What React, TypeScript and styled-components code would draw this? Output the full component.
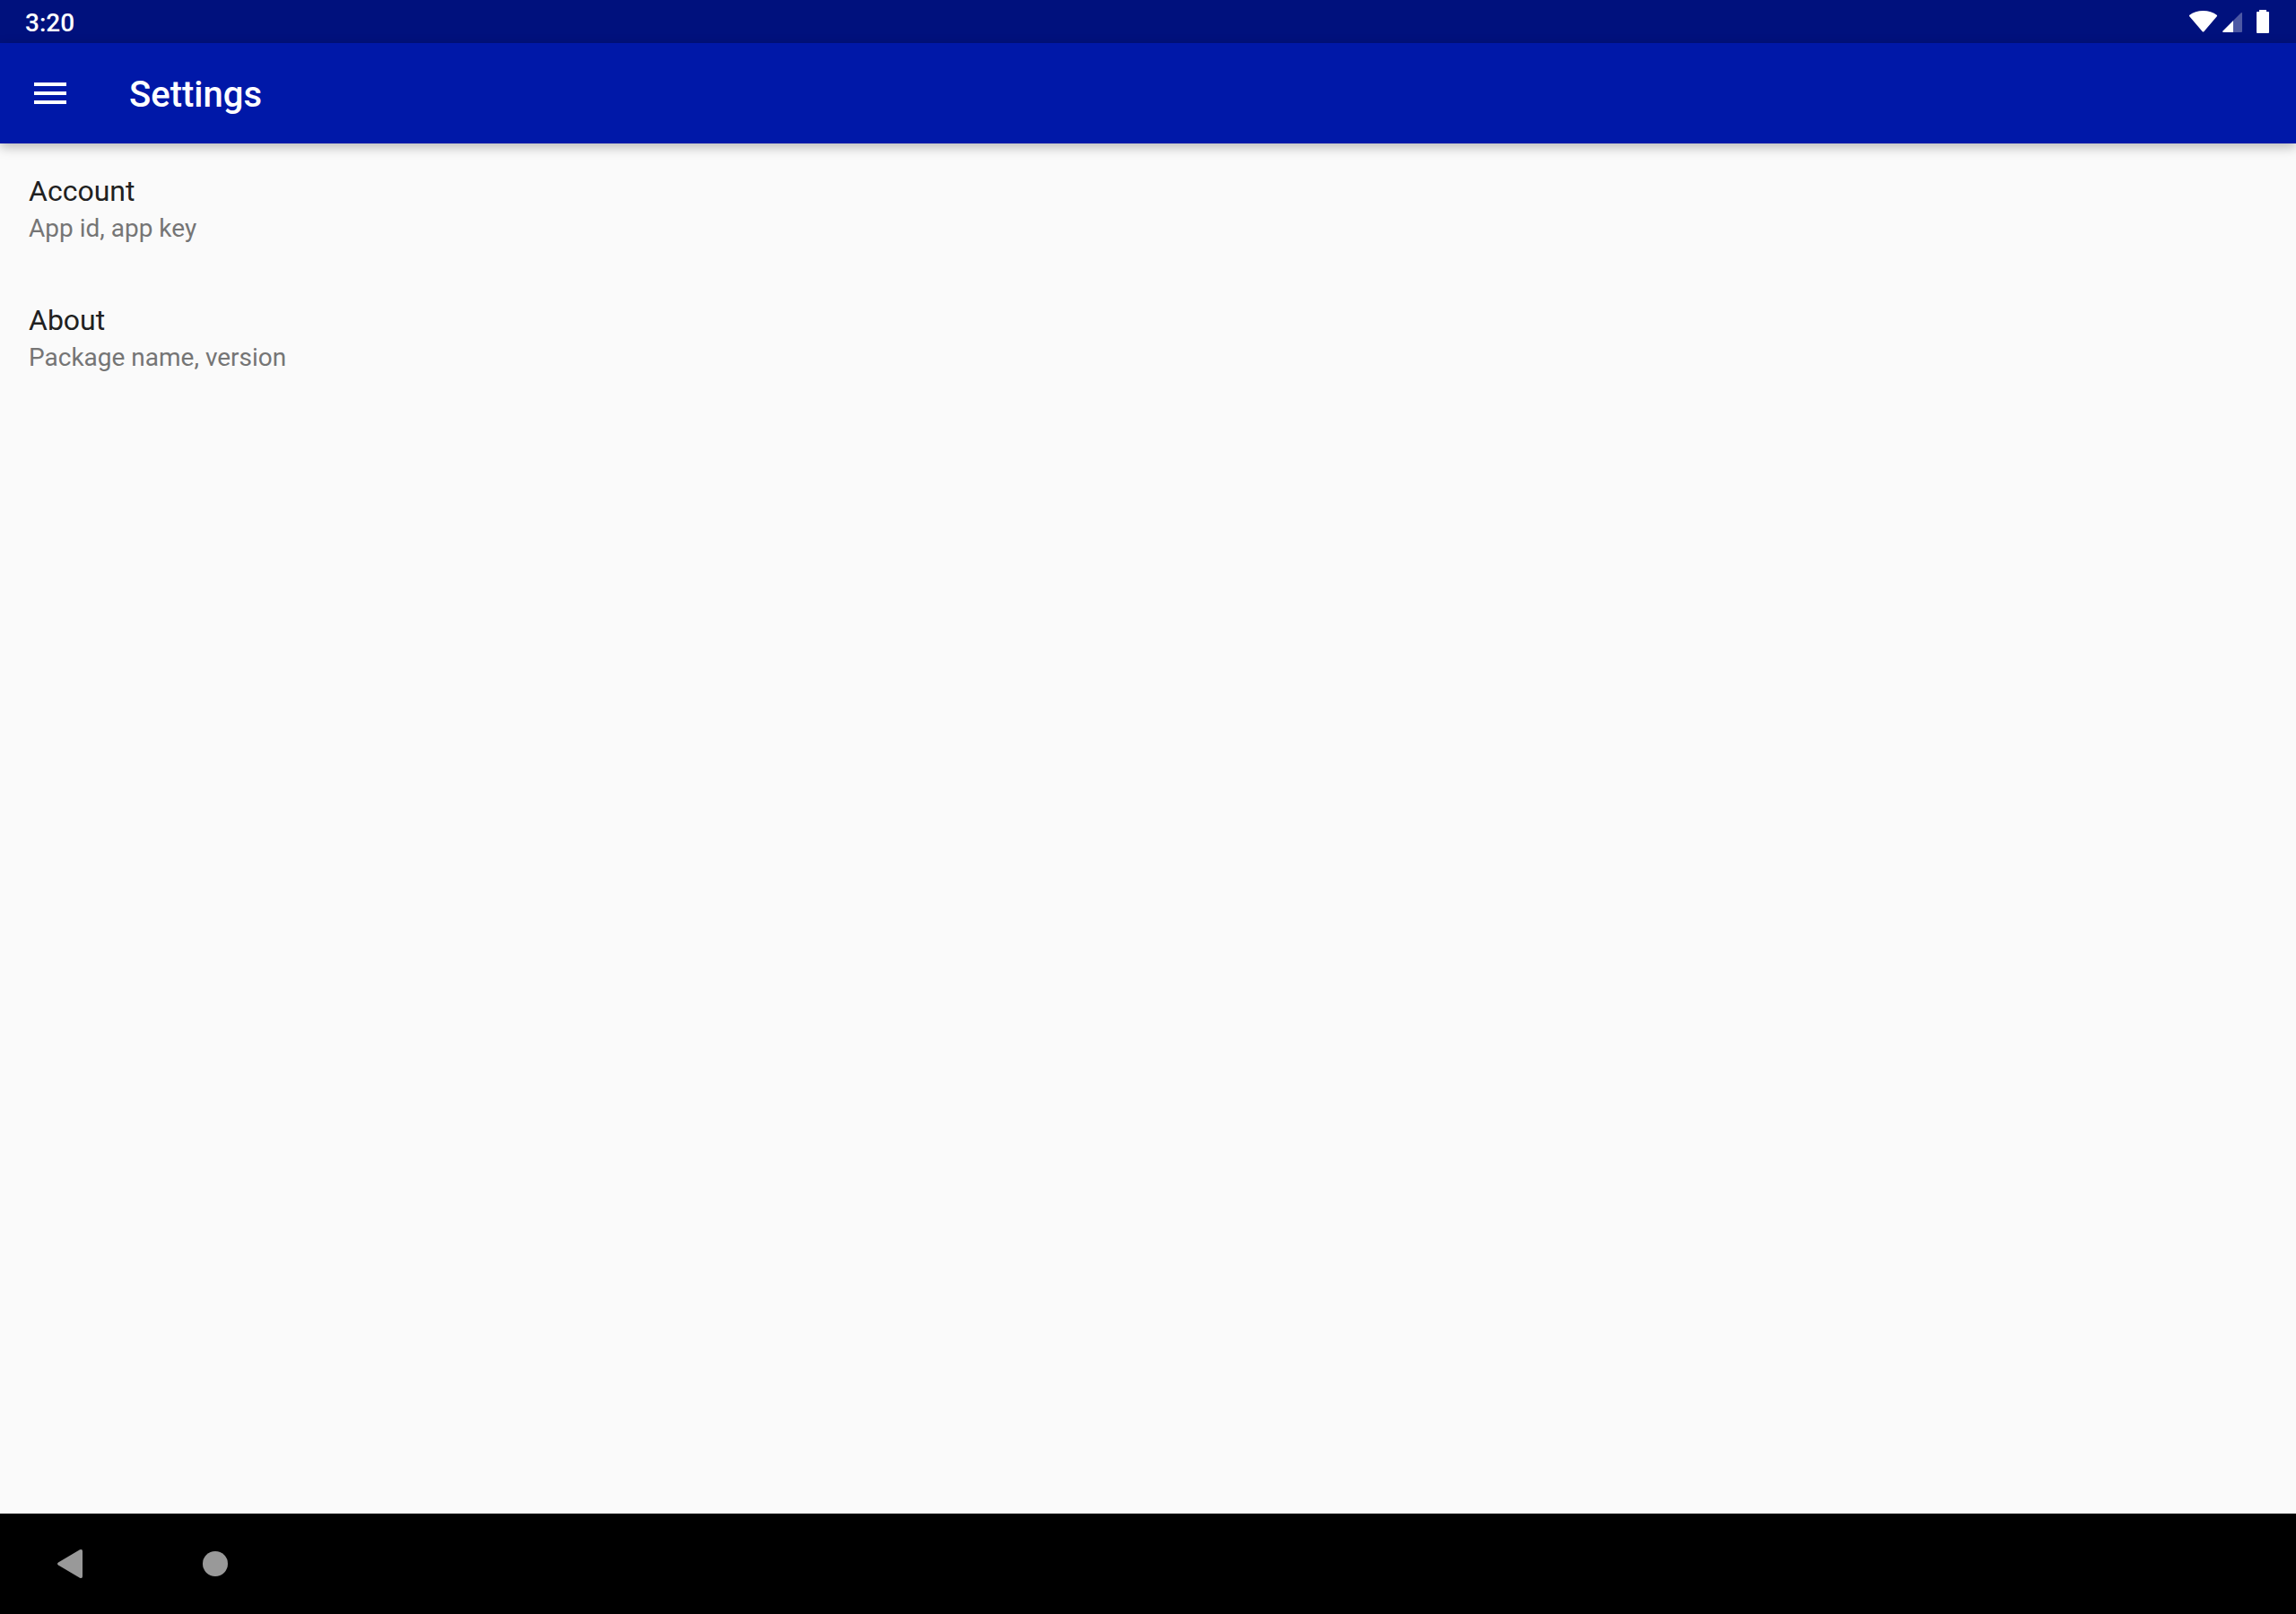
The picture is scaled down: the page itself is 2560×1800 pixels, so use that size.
import React from "react";
import styled, { createGlobalStyle } from "styled-components";

const GlobalStyle = createGlobalStyle`
  *, *::before, *::after { box-sizing: border-box; }
  body { margin: 0; background: #fafafa; font-family: Roboto, "Noto Sans", sans-serif; }
`;

const Screen = styled.div`
  display: flex;
  flex-direction: column;
  min-height: 100vh;
`;

const StatusBar = styled.div`
  display: flex;
  align-items: center;
  justify-content: space-between;
  height: 48px;
  padding: 0 28px;
  background: #00117d;
  color: #ffffff;
`;

const Clock = styled.time`
  padding-top: 4px;
  font-size: 28px;
  font-weight: 500;
  line-height: 36px;
`;

const StatusIcons = styled.svg`
  display: block;
  width: 92px;
  height: 48px;
  fill: currentColor;
`;

const AppBar = styled.header`
  display: flex;
  align-items: center;
  gap: 32px;
  height: 112px;
  background: #0018a8;
  color: #ffffff;
  box-shadow: 0 4px 12px rgba(0, 0, 0, 0.27);
`;

const IconButton = styled.button<{ $color?: string }>`
  display: flex;
  align-items: center;
  justify-content: center;
  width: 112px;
  height: 112px;
  padding: 0;
  border: 0;
  background: transparent;
  color: ${({ $color }) => $color ?? "inherit"};
  cursor: pointer;
`;

const NavButton = styled(IconButton)`
  width: 160px;
`;

const Glyph = styled.svg`
  display: block;
  width: 48px;
  height: 48px;
  fill: currentColor;
`;

const PageTitle = styled.h1`
  margin: 0;
  padding-top: 4px;
  font-size: 40px;
  font-weight: 500;
  line-height: 48px;
`;

const Preferences = styled.main`
  flex: 1;
`;

const Preference = styled.button`
  display: flex;
  flex-direction: column;
  gap: 4px;
  width: 100%;
  padding: 33px 32px 31px;
  border: 0;
  background: transparent;
  font-family: inherit;
  text-align: left;
  cursor: pointer;
`;

const PreferenceTitle = styled.span`
  color: #212121;
  font-size: 32px;
  line-height: 40px;
`;

const PreferenceSummary = styled.span`
  color: #757575;
  font-size: 28px;
  line-height: 36px;
`;

const NavigationBar = styled.nav`
  display: flex;
  height: 112px;
  background: #000000;
`;

const preferences = [
  { title: "Account", summary: "App id, app key" },
  { title: "About", summary: "Package name, version" },
];

export default function App() {
  return (
    <Screen>
      <GlobalStyle />
      <StatusBar>
        <Clock>3:20</Clock>
        <StatusIcons viewBox="0 0 92 48" role="img" aria-label="Wi-Fi, mobile signal, battery">
          <path d="M1 17Q7.500 12 16.500 12Q25.500 12 32 17L32 18L17.500 35Q16.500 36.200 15.500 35L1 18Z" />
          <path d="M59.500 14Q60 14 60 15V35Q60 36 59 36H50V23L58.500 14.500Z" opacity="0.3" />
          <path d="M50 23V36H39Q37.500 36 38.500 34.500Z" />
          <path d="M79 11H87V13H89Q90 13 90 14V36Q90 37 89 37H77Q76 37 76 36V14Q76 13 77 13H79Z" />
        </StatusIcons>
      </StatusBar>
      <AppBar>
        <IconButton aria-label="Open navigation menu">
          <Glyph viewBox="0 0 24 24" aria-hidden="true">
            <path d="M3 18h18v-2H3v2zm0-5h18v-2H3v2zm0-7v2h18V6H3z" />
          </Glyph>
        </IconButton>
        <PageTitle>Settings</PageTitle>
      </AppBar>
      <Preferences>
        {preferences.map(({ title, summary }) => (
          <Preference key={title}>
            <PreferenceTitle>{title}</PreferenceTitle>
            <PreferenceSummary>{summary}</PreferenceSummary>
          </Preference>
        ))}
      </Preferences>
      <NavigationBar aria-label="System navigation">
        <NavButton $color="#999999" aria-label="Back">
          <Glyph viewBox="0 0 48 48" aria-hidden="true">
            <path d="M9 22.500L33 8.300Q36 7 36 10V38Q36 41 33 39.700L9 25.500Q7 24 9 22.500Z" />
          </Glyph>
        </NavButton>
        <NavButton $color="#999999" aria-label="Home">
          <Glyph viewBox="0 0 48 48" aria-hidden="true">
            <circle cx="24" cy="24" r="14" />
          </Glyph>
        </NavButton>
      </NavigationBar>
    </Screen>
  );
}
